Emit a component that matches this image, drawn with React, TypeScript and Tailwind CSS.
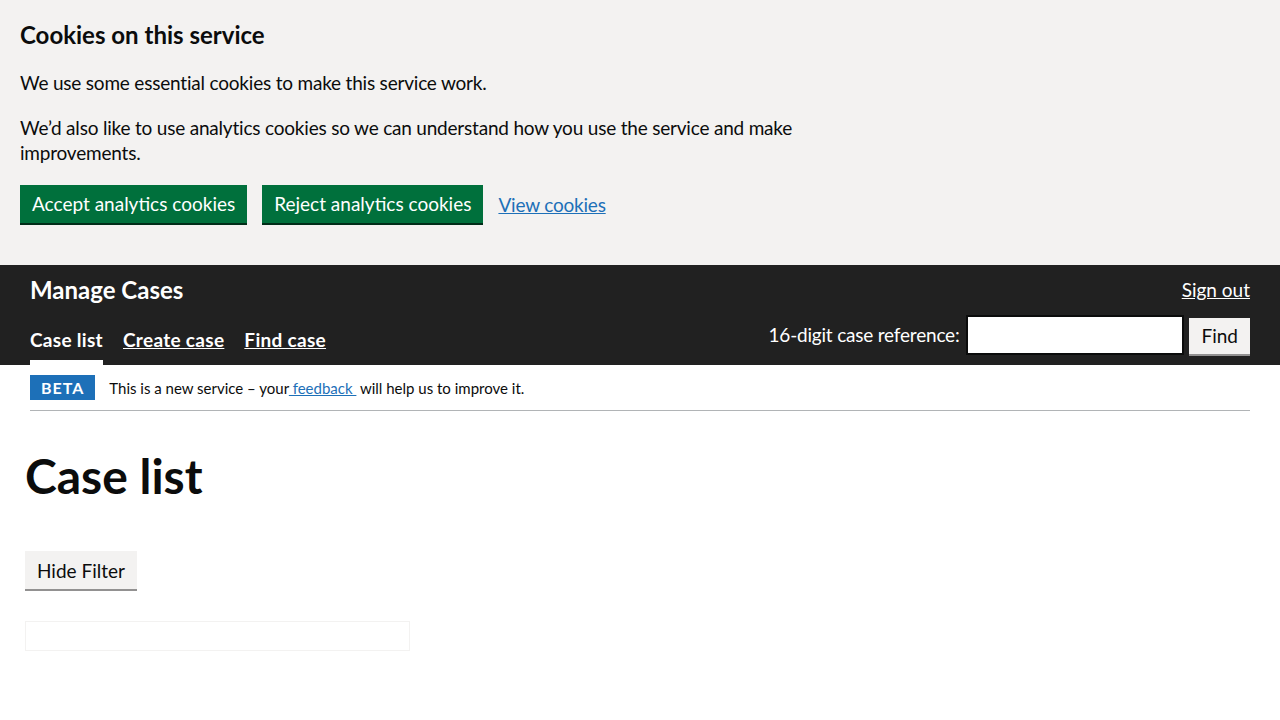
import React from "react";

export default function App() {
  const font = { fontFamily: 'Lato, "Liberation Sans", Arial, sans-serif' };
  return (
    <div style={font} className="min-h-[720px] bg-white text-[#0b0c0c]">
      {/* Cookie banner */}
      <div className="bg-[#f3f2f1] h-[265px] px-5 pt-[20px]">
        <h2 className="text-[24px] font-bold leading-[30px] mb-[20px]">Cookies on this service</h2>
        <p className="text-[19px] tracking-[-0.2px] leading-[25px] mb-[20px]">We use some essential cookies to make this service work.</p>
        <p className="text-[19px] tracking-[-0.2px] leading-[25px] mb-[20px] max-w-[800px]">
          We’d also like to use analytics cookies so we can understand how you use the service and make improvements.
        </p>
        <div className="flex items-center gap-[15px]">
          <button className="bg-[#00703c] text-white text-[19px] leading-[19px] px-[12px] pt-[9px] pb-[10px] shadow-[0_2px_0_#002d18]">
            Accept analytics cookies
          </button>
          <button className="bg-[#00703c] text-white text-[19px] leading-[19px] px-[12px] pt-[9px] pb-[10px] shadow-[0_2px_0_#002d18]">
            Reject analytics cookies
          </button>
          <a className="text-[#1d70b8] underline text-[19px] leading-[25px] tracking-[-0.2px]">View cookies</a>
        </div>
      </div>

      {/* Header */}
      <div className="bg-[#212121] h-[100px] px-[30px] text-white">
        <div className="flex justify-between items-start pt-[12px]">
          <div className="text-[24px] font-bold leading-[26px]">Manage Cases</div>
          <a className="text-[19px] underline leading-[26px]">Sign out</a>
        </div>
        <div className="flex justify-between items-end mt-[12px]">
          <div className="flex items-end gap-[20px] text-[19px] font-bold tracking-[0.3px]">
            <div className="border-b-[5px] border-white pb-[8px] leading-[25px]">Case list</div>
            <a className="underline leading-[25px] pb-[13px]">Create case</a>
            <a className="underline leading-[25px] pb-[13px]">Find case</a>
          </div>
          <div className="flex items-center gap-[5px] pb-[10px]">
            <span className="text-[19px] tracking-[-0.2px] mr-[2px]">16-digit case reference:</span>
            <input className="w-[218px] h-[40px] border-2 border-[#0b0c0c] bg-white" />
            <button className="bg-[#f3f2f1] text-[#0b0c0c] text-[19px] leading-[19px] px-[12px] pt-[8px] pb-[9px] shadow-[0_2px_0_#929191] mt-[2px]">
              Find
            </button>
          </div>
        </div>
      </div>

      {/* Beta banner */}
      <div className="mx-[30px] flex items-center gap-[14px] pt-[10px] pb-[10px] border-b border-[#b1b4b6]">
        <span className="bg-[#1d70b8] text-white font-bold text-[16px] tracking-[1px] leading-[16px] px-[11px] pt-[5px] pb-[4px]">
          BETA
        </span>
        <span className="text-[15px] leading-[20px]">
          This is a new service – your<a className="text-[#1d70b8] underline">{"\u00a0feedback\u00a0"}</a> will help us to improve it.
        </span>
      </div>

      {/* Main */}
      <div className="px-[25px]">
        <h1 className="text-[48px] font-bold leading-[50px] mt-[40px] mb-[50px]">Case list</h1>
        <button className="bg-[#f3f2f1] text-[19px] leading-[19px] px-[12px] pt-[10px] pb-[9px] shadow-[0_2px_0_#929191]">
          Hide Filter
        </button>
        <div className="mt-[32px] w-[385px] h-[30px] border border-[#f3f2f1]" />
      </div>
    </div>
  );
}
